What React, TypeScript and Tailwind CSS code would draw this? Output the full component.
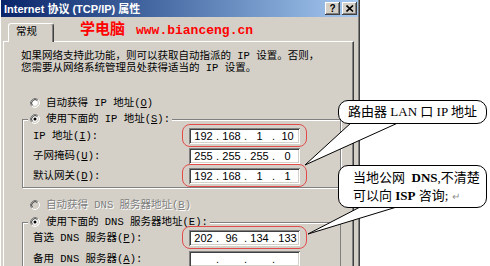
import React from 'react'

const ui = "font-['Liberation_Mono','Noto_Sans_CJK_SC',monospace] text-[10.5px] leading-[14px] text-black"
const bevelOut = 'shadow-[inset_-1px_-1px_0_#404040,inset_1px_1px_0_#fff,inset_-2px_-2px_0_#808080]'
const sunken = 'shadow-[inset_1px_1px_0_#808080,inset_-1px_-1px_0_#fff,inset_2px_2px_0_#404040,inset_-2px_-2px_0_#d4d0c8]'

function Radio({ checked, disabled }: { checked?: boolean; disabled?: boolean }) {
  return (
    <svg width="10" height="10" viewBox="0 0 10 10" className="shrink-0">
      <circle cx="5" cy="5" r="3.5" fill={disabled ? '#d4d0c8' : '#fff'} />
      <path d="M1.82 8.18 A4.5 4.5 0 0 1 8.18 1.82" fill="none" stroke="#808080" />
      <path d="M8.18 1.82 A4.5 4.5 0 0 1 1.82 8.18" fill="none" stroke="#fff" />
      <path d="M2.53 7.47 A3.5 3.5 0 0 1 7.47 2.53" fill="none" stroke="#404040" />
      <path d="M7.47 2.53 A3.5 3.5 0 0 1 2.53 7.47" fill="none" stroke="#d4d0c8" />
      {checked && <circle cx="5" cy="5" r="1.5" fill="#000" />}
    </svg>
  )
}

function IpBox({ parts, ring }: { parts: string[]; ring?: boolean }) {
  return (
    <div className={`relative w-[111px] h-[16px] bg-white ${sunken} flex items-center pl-[2px] font-['Liberation_Sans',sans-serif] text-[11px] leading-none text-black`}>
      {parts.map((p, i) => (
        <React.Fragment key={i}>
          {i > 0 && <span className="w-[3px] text-center">.</span>}
          <span className="w-[25px] text-center">{p}</span>
        </React.Fragment>
      ))}
      {ring && (
        <div className="absolute -left-[7px] -right-[7px] -top-[4px] -bottom-[3px] rounded-[8px] border-[1.5px] border-[#e34b4b]" />
      )}
    </div>
  )
}

function Row({ label, k, parts, ring }: { label: string; k: string; parts: string[]; ring?: boolean }) {
  return (
    <div className="flex items-center">
      <span className="w-[156px] whitespace-pre">
        {label}(<u>{k}</u>):
      </span>
      <IpBox parts={parts} ring={ring} />
    </div>
  )
}

export default function App() {
  return (
    <div className="relative w-[490px] h-[266px] overflow-hidden bg-white">
      {/* dialog window */}
      <div className={`w-[360px] h-full flex flex-col bg-[#d4d0c8] border-l border-l-white border-r border-r-[#404040] pr-[1px] shadow-[inset_-1px_0_0_#808080] ${ui}`}>
        {/* title bar */}
        <div className="h-[17px] shrink-0 flex items-center pl-[3px] pr-[1px] bg-linear-to-r from-[#0a246a] to-[#a6caf0]">
          <span className="font-['Liberation_Sans','Noto_Sans_CJK_SC',sans-serif] font-bold text-[11px] text-white whitespace-pre">
            Internet 协议 (TCP/IP) 属性
          </span>
          <div className="ml-auto flex gap-[2px]">
            <div className={`w-[15px] h-[13px] bg-[#d4d0c8] ${bevelOut} flex items-center justify-center font-['Liberation_Sans',sans-serif] font-bold text-[10px] leading-none`}>
              ?
            </div>
            <div className={`w-[15px] h-[13px] bg-[#d4d0c8] ${bevelOut} flex items-center justify-center`}>
              <svg width="8" height="7" viewBox="0 0 8 7">
                <path d="M0.5 0.5 L7 6.5 M7 0.5 L0.5 6.5" stroke="#000" strokeWidth="1.6" />
              </svg>
            </div>
          </div>
        </div>

        {/* tab row */}
        <div className="h-[24px] shrink-0 flex">
          <div className="relative z-10 ml-[7px] mt-[6px] w-[46px] h-[19px] bg-[#d4d0c8] border-t border-l border-white border-r border-r-[#404040] rounded-t-[3px] shadow-[inset_-1px_0_0_#808080] pl-[7px] pt-[1px]">
            常规
          </div>
          <div className="ml-[26px] mt-[3px] flex items-baseline text-[#ff0000] font-bold leading-[16px]">
            <span className="font-['Noto_Sans_CJK_SC',sans-serif] text-[15px]">学电脑</span>
            <span className="ml-[11px] font-['Liberation_Mono',monospace] text-[13px]">www.bianceng.cn</span>
          </div>
        </div>

        {/* tab panel */}
        <div className="ml-[2px] w-[351px] flex-1 border-t border-l border-white border-r border-r-[#404040] shadow-[inset_-1px_0_0_#808080] flex flex-col">
          <p className="mt-[8px] pl-[17px] leading-[12px]">
            如果网络支持此功能，则可以获取自动指派的 IP 设置。否则，
            <br />
            您需要从网络系统管理员处获得适当的 IP 设置。
          </p>

          <div className="mt-[22px] h-[14px] pl-[26px] flex items-center gap-[6px]">
            <Radio />
            <span className="whitespace-pre">
              自动获得 IP 地址(<u>O</u>)
            </span>
          </div>

          <div className="relative mt-[9px] ml-[18px] w-[319px] border border-[#808080] shadow-[inset_1px_1px_0_#fff,1px_1px_0_#fff] pt-[8px] pb-[3px] pl-[10px] flex flex-col gap-[4px]">
            <div className="absolute -top-[8px] left-[5px] h-[14px] px-[2px] bg-[#d4d0c8] flex items-center gap-[6px]">
              <Radio checked />
              <span className="whitespace-pre">
                使用下面的 IP 地址(<u>S</u>):
              </span>
            </div>
            <Row label="IP 地址" k="I" parts={['192', '168', '1', '10']} ring />
            <Row label="子网掩码" k="U" parts={['255', '255', '255', '0']} />
            <Row label="默认网关" k="D" parts={['192', '168', '1', '1']} ring />
          </div>

          <div className="mt-[10px] h-[14px] pl-[26px] flex items-center gap-[6px] text-[#808080] [text-shadow:1px_1px_0_#fff]">
            <Radio disabled />
            <span className="whitespace-pre">
              自动获得 DNS 服务器地址(<u>B</u>)
            </span>
          </div>

          <div className="relative mt-[10px] ml-[18px] w-[319px] flex-1 border border-b-0 border-[#808080] shadow-[inset_1px_1px_0_#fff] pt-[7px] pl-[10px] flex flex-col gap-[5px]">
            <div className="absolute -top-[8px] left-[5px] h-[14px] px-[2px] bg-[#d4d0c8] flex items-center gap-[6px]">
              <Radio checked />
              <span className="whitespace-pre">
                使用下面的 DNS 服务器地址(<u>E</u>):
              </span>
            </div>
            <Row label="首选 DNS 服务器" k="P" parts={['202', '96', '134', '133']} ring />
            <Row label="备用 DNS 服务器" k="A" parts={['', '', '', '']} />
          </div>
        </div>
      </div>

      {/* callout tails */}
      <svg className="absolute left-0 top-0 pointer-events-none" width="490" height="266" viewBox="0 0 490 266">
        <polygon points="305,165 352,122 400,122" fill="#fff" stroke="#000" strokeWidth="1" />
        <polygon points="308,234 362,206 400,206" fill="#fff" stroke="#000" strokeWidth="1" />
      </svg>

      {/* callouts */}
      <div className="absolute left-[338px] top-[100px] w-[149px] h-[24px] rounded-[10px] border border-black bg-white flex items-center justify-center font-['Liberation_Serif','Noto_Sans_CJK_SC',serif] text-[13px] text-black whitespace-pre">
        路由器 LAN 口 IP 地址
      </div>
      <div className="absolute left-[338px] top-[165px] w-[149px] h-[43px] rounded-[10px] border border-black bg-white pl-[14px] pt-[3px] font-['Liberation_Serif','Noto_Sans_CJK_SC',serif] text-[13px] leading-[18px] text-black whitespace-pre">
        <div>
          当地公网  <b>DNS</b>,不清楚
        </div>
        <div>
          可以向 <b>ISP</b> 咨询; <span className="text-[10px] text-[#909090]">↵</span>
        </div>
      </div>
    </div>
  )
}
